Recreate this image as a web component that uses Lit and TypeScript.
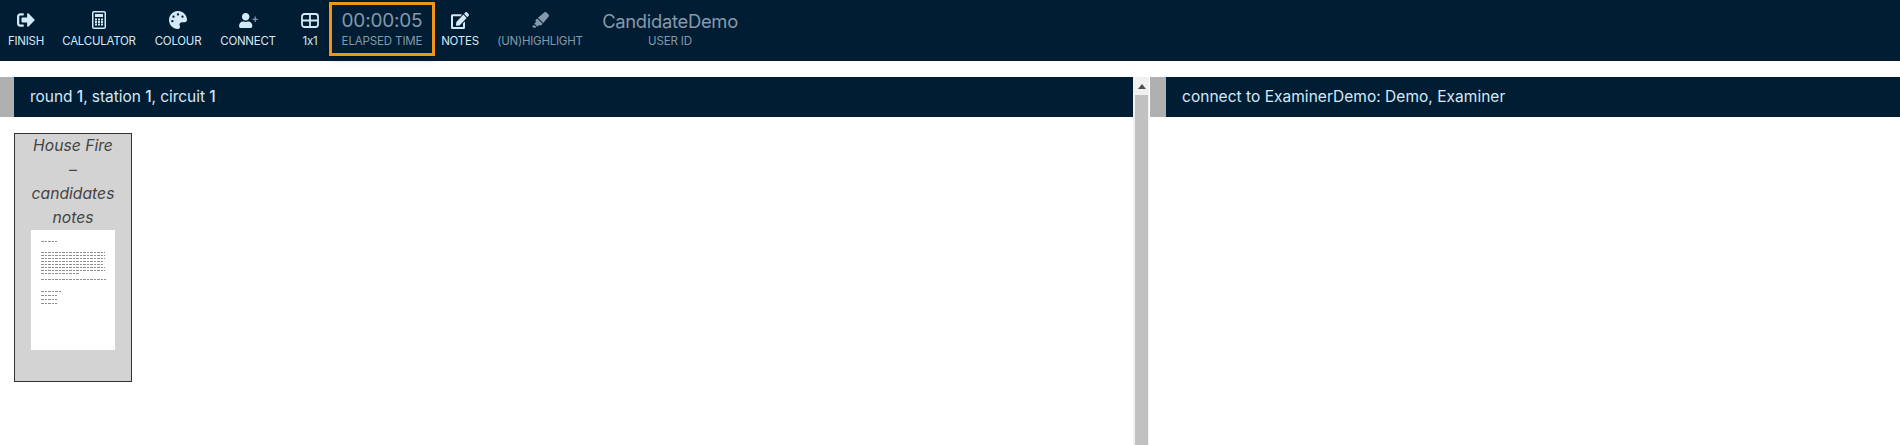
import { LitElement, html, css, svg } from "lit";
import { customElement } from "lit/decorators.js";

const icon = (vb: string, d: string, w: number, h: number) => html`<span class="box"><svg viewBox=${vb} width=${w} height=${h} preserveAspectRatio="none"><path fill="currentColor" d=${d}></path></svg></span>`;

const SIGNOUT = "M497 273L329 441c-15 15-41 4.5-41-17v-96H152c-13.3 0-24-10.7-24-24v-96c0-13.3 10.7-24 24-24h136V88c0-21.4 25.9-32 41-17l168 168c9.3 9.4 9.3 24.6 0 34zM192 436v-40c0-6.6-5.4-12-12-12H96c-17.7 0-32-14.3-32-32V160c0-17.7 14.3-32 32-32h84c6.6 0 12-5.4 12-12V76c0-6.6-5.4-12-12-12H96c-53 0-96 43-96 96v192c0 53 43 96 96 96h84c6.6 0 12-5.4 12-12z";
const PALETTE = "M204.3 5C104.9 24.4 24.8 104.3 5.2 203.4c-37 187 131.7 326.4 258.8 306.7 41.2-6.4 61.4-54.6 42.5-91.7-23.1-45.4 9.9-98.4 60.9-98.4h79.7c35.8 0 64.8-29.6 64.9-65.3C511.5 97.1 368.1-26.9 204.3 5zM96 320c-17.7 0-32-14.3-32-32s14.3-32 32-32 32 14.3 32 32-14.3 32-32 32zm32-128c-17.7 0-32-14.3-32-32s14.3-32 32-32 32 14.3 32 32-14.3 32-32 32zm128-64c-17.7 0-32-14.3-32-32s14.3-32 32-32 32 14.3 32 32-14.3 32-32 32zm128 64c-17.7 0-32-14.3-32-32s14.3-32 32-32 32 14.3 32 32-14.3 32-32 32z";
const USER = "M224 256c70.700 0 128-57.300 128-128S294.700 0 224 0 96 57.300 96 128s57.300 128 128 128zm89.600 32h-16.700c-22.200 10.200-46.900 16-72.900 16s-50.600-5.800-72.900-16h-16.700C60.200 288 0 348.200 0 422.400V464c0 26.500 21.500 48 48 48h352c26.500 0 48-21.500 48-48v-41.600c0-74.200-60.200-134.400-134.400-134.400z";
const PLUS = "M530 120h36v74h74v36h-74v74h-36v-74h-74v-36h74z";
const EDIT = "M402.600 83.200l90.200 90.200c3.800 3.800 3.800 10 0 13.800L274.400 405.600l-92.800 10.300c-12.400 1.400-22.900-9.100-21.500-21.500l10.300-92.800L388.800 83.200c3.800-3.800 10-3.800 13.800 0zm162-22.900l-48.800-48.800c-15.200-15.200-39.900-15.200-55.200 0l-35.400 35.400c-3.800 3.800-3.800 10 0 13.800l90.200 90.200c3.800 3.800 10 3.800 13.800 0l35.400-35.400c15.200-15.300 15.200-40 0-55.200zM384 346.200V448H64V128h229.800c3.200 0 6.200-1.300 8.500-3.500l40-40c7.600-7.600 2.200-20.500-8.500-20.500H48C21.500 64 0 85.500 0 112v352c0 26.500 21.500 48 48 48h352c26.500 0 48-21.500 48-48V306.200c0-10.700-12.900-16-20.500-8.500l-40 40c-2.200 2.300-3.500 5.300-3.500 8.500z";
const HIGHLIGHT = "M0 479.980L99.920 512l35.450-35.450-67.040-67.040L0 479.980zm124.610-240.010a36.592 36.592 0 0 0-10.790 38.100l13.050 42.830-50.930 50.940 96.230 96.230 50.860-50.860 42.740 13.080c13.730 4.200 28.650-.010 38.150-10.780l35.550-41.640-173.340-173.340-41.520 35.440zm403.310-160.700l-63.200-63.200c-20.490-20.490-53.380-21.520-75.120-2.350L190.550 183.680l169.770 169.780L530.270 154.400c19.180-21.740 18.150-54.630-2.350-75.130z";

const calculator = html`<span class="box"><svg viewBox="0 0 14 18" width="14" height="18" fill="currentColor">
  <path fill-rule="evenodd" d="M2 0h10a2 2 0 0 1 2 2v14a2 2 0 0 1-2 2H2a2 2 0 0 1-2-2V2a2 2 0 0 1 2-2zm0 1.500a.5.5 0 0 0-.5.5v14a.5.5 0 0 0 .5.5h10a.5.5 0 0 0 .5-.5V2a.5.5 0 0 0-.5-.5z"></path>
  <rect x="3" y="3" width="8" height="3"></rect>
  ${[7.5, 10, 12.5].map((y) => [3, 6, 9].map((x) => svg`<rect x=${x} y=${y} width="2" height="2"></rect>`))}
</svg></span>`;

const userPlus = html`<span class="box"><svg viewBox="0 0 640 512" width="19" height="15"><path fill="currentColor" d=${USER}></path><path fill="currentColor" opacity=".7" d=${PLUS}></path></svg></span>`;

const grid = html`<span class="box"><svg viewBox="0 0 18 15" width="18" height="15">
  <rect x="1" y="1" width="16" height="13" rx="2.500" fill="none" stroke="currentColor" stroke-width="1.800"></rect>
  <path d="M9 1v13M1 7.500h16" stroke="currentColor" stroke-width="1.800"></path>
</svg></span>`;

const TEXT_ROWS: [number, number][] = [
  [11, 16], [22, 64], [25, 64], [28, 64], [31, 62], [34, 62], [37, 64], [40, 64], [43, 39],
  [49, 65], [61, 21], [65, 16], [69, 16], [73, 16],
];

@customElement("app-root")
export class AppRoot extends LitElement {
  static styles = css`
    :host { display: block; height: 445px; overflow: hidden; background: #fff; font-family: "Inter", "DejaVu Sans", sans-serif; }
    .bar { display: grid; grid-template-columns: 52px 94px 64px 76px 43px 106px 50px 110px 150px; height: 61px; background: #011d33; }
    .item { display: flex; flex-direction: column; align-items: center; color: #d3e9f8; font-size: 11.5px; letter-spacing: -0.25px; line-height: 14px; padding-top: 11px; white-space: nowrap; }
    .box { height: 18px; margin-bottom: 5px; display: flex; align-items: center; justify-content: center; }
    .item.shift { padding-left: 5px; }
    .muted { color: #8499ab; }
    .timer { box-sizing: border-box; height: 54px; margin-top: 2px; border: 3px solid #f2941c; box-shadow: 0 3px 6px rgba(0,0,0,.25); display: flex; flex-direction: column; align-items: center; color: #8499ab; padding-top: 3px; position: relative; background: #011d33; }
    .big { font-size: 19px; line-height: 26px; letter-spacing: -0.2px; }
    .small { font-size: 11.5px; line-height: 14px; letter-spacing: -0.13px; white-space: nowrap; }
    .user { display: flex; flex-direction: column; align-items: center; color: #8499ab; padding-top: 8px; }
    .user .big { font-size: 18.4px; letter-spacing: -0.3px; }
    .main { display: grid; grid-template-columns: 1133px 16px 1fr; margin-top: 16px; height: 368px; }
    .head { display: flex; align-items: center; height: 40px; background: #011d33; color: #d3e9f8; font-size: 15.5px; }
    .head span { margin-top: -2px; }
    .head::before { content: ""; width: 14px; height: 100%; background: #b0b0b0; margin-right: 16px; }
    .head b { font-weight: 500; }
    .right { margin-left: 1px; }
    .right .head::before { width: 16px; }
    .right .head span { letter-spacing: 0.03px; }
    .left-text { letter-spacing: -0.05px; }
    .scroll { background: #f1f1f1; display: flex; flex-direction: column; align-items: center; padding: 0 1px 0 2px; }
    .arrow { width: 0; height: 0; margin: 7px 0 6px; border: 4px solid transparent; border-top: 0; border-bottom: 5px solid #505050; }
    .thumb { align-self: stretch; flex: 1; background: #c1c1c1; }
    .card { box-sizing: border-box; width: 118px; height: 249px; margin: 16px 0 0 14px; border: 1px solid #333; background: #d3d3d3; display: flex; flex-direction: column; align-items: center; }
    .title { text-align: center; font-style: italic; font-size: 15.700px; line-height: 24px; color: #444; width: 100%; }
    .page { display: block; }
    .page line { stroke: #444; stroke-width: 1; stroke-dasharray: 3 1 2 1; opacity: .6; }
  `;

  render() {
    return html`
      <div class="bar">
        <div class="item">${icon("0 0 512 512", SIGNOUT, 18, 18)}FINISH</div>
        <div class="item">${calculator}CALCULATOR</div>
        <div class="item">${icon("0 0 512 512", PALETTE, 18, 18)}COLOUR</div>
        <div class="item">${userPlus}CONNECT</div>
        <div class="item shift">${grid}1x1</div>
        <div class="timer"><div class="big">00:00:05</div><div class="small">ELAPSED TIME</div></div>
        <div class="item">${icon("0 0 576 512", EDIT, 18, 17)}NOTES</div>
        <div class="item muted">${icon("0 0 544 512", HIGHLIGHT, 17, 16)}(UN)HIGHLIGHT</div>
        <div class="user"><div class="big">CandidateDemo</div><div class="small">USER ID</div></div>
      </div>
      <div class="main">
        <div>
          <div class="head"><span class="left-text">round <b>1</b>, station <b>1</b>, circuit <b>1</b></span></div>
          <div class="card">
            <div class="title">House Fire<br />–<br />candidates<br />notes</div>
            <svg class="page" width="84" height="120" viewBox="0 0 84 120">
              <rect width="84" height="120" fill="#fff"></rect>
              ${TEXT_ROWS.map(([y, w]) => svg`<line x1="10" x2=${10 + w} y1=${y + 0.5} y2=${y + 0.5}></line>`)}
            </svg>
          </div>
        </div>
        <div class="scroll"><div class="arrow"></div><div class="thumb"></div></div>
        <div class="right">
          <div class="head"><span>connect to ExaminerDemo: Demo, Examiner</span></div>
        </div>
      </div>
    `;
  }
}
